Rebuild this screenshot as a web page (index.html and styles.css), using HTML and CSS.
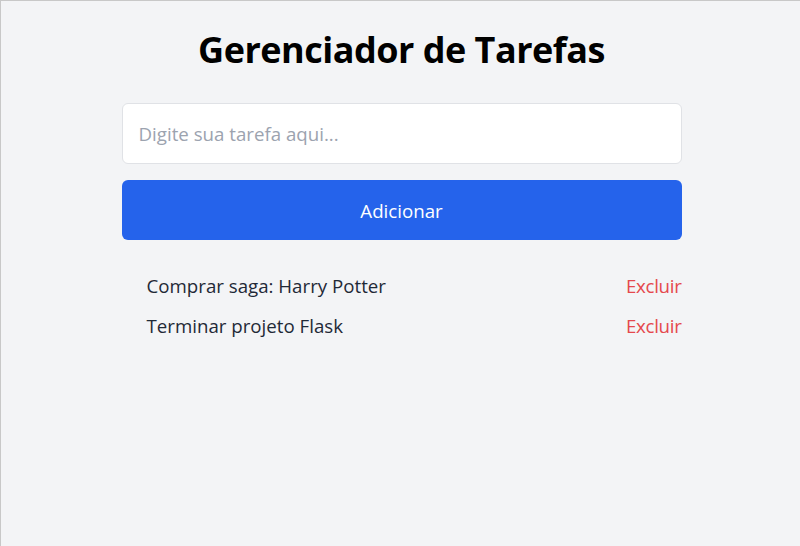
FILE: index.html
```html
<!DOCTYPE html>
<html lang="pt-BR">
<head>
<meta charset="utf-8">
<title>Gerenciador de Tarefas</title>
<link rel="stylesheet" href="styles.css">
</head>
<body>
<main class="container">
  <h1 class="title">Gerenciador de Tarefas</h1>
  <form class="task-form">
    <input class="task-input" type="text" placeholder="Digite sua tarefa aqui...">
    <button class="add-btn" type="button">Adicionar</button>
  </form>
  <ul class="task-list">
    <li class="task"><span class="task-text">Comprar saga: Harry Potter</span><a class="delete" href="#">Excluir</a></li>
    <li class="task"><span class="task-text">Terminar projeto Flask</span><a class="delete" href="#">Excluir</a></li>
  </ul>
</main>
</body>
</html>
```
FILE: styles.css
```css
* { box-sizing: border-box; }
html, body { height: 100%; }
body {
  margin: 0;
  background: #f3f4f6;
  border-top: 1px solid #c8c8c8;
  border-left: 1px solid #c8c8c8;
  font-family: "Open Sans", "Noto Sans", sans-serif;
  color: #111827;
  padding-left: 2px;
}
.container {
  width: 560px;
  margin: 0 auto;
  padding-top: 23px;
}
.title {
  margin: 0 0 27px;
  font-size: 36px;
  line-height: 52px;
  font-weight: 700;
  text-align: center;
  color: #000;
  letter-spacing: -0.5px;
}
.task-form {
  display: flex;
  flex-direction: column;
  gap: 16px;
}
.task-input {
  height: 61px;
  padding: 0 16px;
  border: 1px solid #e0e2e6;
  border-radius: 6px;
  background: #fff;
  font-family: inherit;
  font-size: 18.7px;
  color: #111827;
  outline: none;
}
.task-input::placeholder { color: #9ca3af; }
.add-btn {
  height: 60px;
  border: none;
  border-radius: 6px;
  background: #2563eb;
  color: #fff;
  font-family: inherit;
  font-size: 18.7px;
  cursor: pointer;
}
.task-list {
  list-style: none;
  margin: 25px 0 0;
  padding: 0 0 0 25px;
}
.task {
  display: flex;
  justify-content: space-between;
  align-items: center;
  height: 40px;
  font-size: 18.7px;
  color: #1f2937;
}
.delete {
  color: #e5484d;
  text-decoration: none;
  letter-spacing: -0.3px;
}
```
